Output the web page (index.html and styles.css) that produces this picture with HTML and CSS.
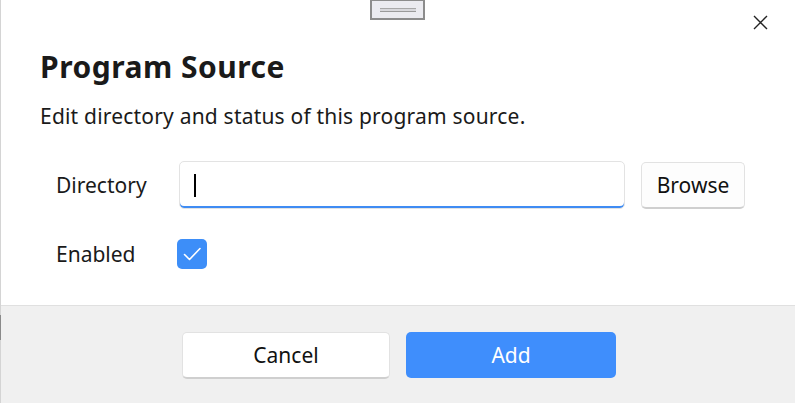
FILE: index.html
```html
<!DOCTYPE html>
<html>
<head>
<meta charset="utf-8">
<link rel="stylesheet" href="styles.css">
</head>
<body>
<div class="dialog">
  <div class="content">
    <div class="handle"><span class="grip"></span></div>
    <button class="close" aria-label="Close">
      <svg width="15" height="15" viewBox="0 0 15 15"><path d="M1 1L14 14M14 1L1 14" stroke="#222" stroke-width="1.4" fill="none"/></svg>
    </button>
    <h1 class="title">Program Source</h1>
    <p class="subtitle">Edit directory and status of this program source.</p>
    <div class="row">
      <label class="label">Directory</label>
      <div class="input"><span class="caret"></span></div>
      <button class="btn browse">Browse</button>
    </div>
    <div class="row row-check">
      <label class="label">Enabled</label>
      <span class="checkbox">
        <svg width="30" height="30" viewBox="0 0 30 30"><path d="M7.5 15.5L12.5 20.5L23 9.5" stroke="#fff" stroke-width="1.6" fill="none" stroke-linecap="round" stroke-linejoin="round"/></svg>
      </span>
    </div>
  </div>
  <div class="footer">
    <button class="btn cancel">Cancel</button>
    <button class="btn add">Add</button>
  </div>
  <span class="edge-mark"></span>
</div>
</body>
</html>
```
FILE: styles.css
```css
* { box-sizing: border-box; }
html, body { margin: 0; padding: 0; }
body {
  width: 795px;
  height: 403px;
  overflow: hidden;
  background: #fff;
  font-family: "Noto Sans", "Open Sans", sans-serif;
  color: #1a1a1a;
}
.dialog {
  position: relative;
  height: 403px;
  display: flex;
  flex-direction: column;
  border-left: 1px solid #d4d4d4;
}
.content {
  position: relative;
  height: 305px;
  padding: 0 0 0 39px;
}
.handle {
  width: 55px;
  height: 20px;
  margin: 0 auto 0 330px;
  border: 2px solid #8c8c8c;
  border-top-width: 1px;
  background: #ebebf0;
  display: flex;
  align-items: center;
  justify-content: center;
}
.grip {
  width: 36px;
  height: 4px;
  border-top: 1px solid #a8a8a8;
  border-bottom: 1px solid #9a9a9a;
  background: #d8d8dc;
  margin-top: 1px;
}
.close {
  position: absolute;
  top: 15px;
  right: 27px;
  width: 15px;
  height: 15px;
  padding: 0;
  border: none;
  background: none;
  display: flex;
}
.title {
  margin: 27px 0 0 0;
  font-size: 30px;
  line-height: 40px;
  font-weight: 700;
  letter-spacing: 0.5px;
}
.subtitle {
  margin: 15px 0 0 0;
  font-size: 21px;
  line-height: 28px;
  letter-spacing: 0.2px;
}
.row {
  display: flex;
  align-items: center;
  margin-top: 31px;
  padding-left: 16px;
  height: 48px;
}
.label {
  width: 123px;
  font-size: 21px;
}
.input {
  width: 446px;
  height: 48px;
  border: 1px solid #e3e3e3;
  border-radius: 5px;
  box-shadow: inset 0 -2px 0 #3f8cf3;
  display: flex;
  align-items: center;
  padding-left: 14px;
}
.caret {
  width: 2px;
  height: 23px;
  background: #000;
}
.btn {
  font-family: inherit;
  font-size: 21px;
  color: #111;
  border-radius: 5px;
  cursor: pointer;
}
.browse {
  margin-left: 16px;
  width: 104px;
  height: 47px;
  background: #fdfdfd;
  border: 1px solid #e2e2e2;
  border-bottom: 2px solid #cfcfcf;
  padding: 0;
}
.row-check {
  margin-top: 30px;
  height: 30px;
}
.checkbox {
  width: 30px;
  height: 30px;
  margin-left: -2px;
  border-radius: 5px;
  background: #3d8ef8;
  display: flex;
}
.footer {
  flex: 1;
  background: #f0f0f0;
  border-top: 1px solid #e0e0e0;
  display: flex;
  justify-content: center;
  align-items: flex-start;
  gap: 16px;
  padding-top: 26px;
  padding-left: 2px;
}
.cancel {
  width: 208px;
  height: 47px;
  background: #fff;
  border: 1px solid #e2e2e2;
  border-bottom: 2px solid #cfcfcf;
  padding: 0;
}
.add {
  width: 210px;
  height: 46px;
  background: #3f8efc;
  color: #fff;
  border: none;
  padding: 0;
}
.edge-mark {
  position: absolute;
  left: -1px;
  top: 315px;
  width: 1px;
  height: 25px;
  background: #8a8a8a;
}
```
